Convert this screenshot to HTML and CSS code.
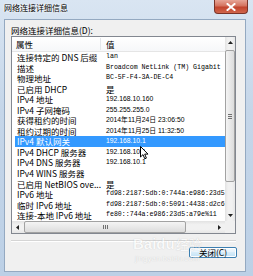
FILE: index.html
```html
<!DOCTYPE html>
<html lang="zh-CN">
<head>
  <meta charset="UTF-8">
  <title>网络连接详细信息</title>
  <link rel="stylesheet" href="styles.css">
</head>
<body>
  <div class="window">
    <div class="titlebar">
      <span class="title">网络连接详细信息</span>
      <span class="close-btn">
        <svg width="10" height="8" viewBox="0 0 10 8"><path d="M1.5 1 L8.5 7 M8.5 1 L1.5 7" stroke="#fff" stroke-width="2" stroke-linecap="square"/></svg>
      </span>
    </div>
    <div class="face">
      <div class="label">网络连接详细信息(D):</div>
      <div class="listview">
        <div class="list-main">
          <div class="list-header">
            <span class="hcell hcell-prop">属性</span>
            <span class="hcell">值</span>
          </div>
          <div class="row"><span class="prop">连接特定的 DNS 后缀</span><span class="val mono">lan</span></div>
          <div class="row"><span class="prop">描述</span><span class="val mono">Broadcom NetLink (TM) Gigabit</span></div>
          <div class="row"><span class="prop">物理地址</span><span class="val mono">BC-5F-F4-3A-DE-C4</span></div>
          <div class="row"><span class="prop">已启用 DHCP</span><span class="val">是</span></div>
          <div class="row"><span class="prop">IPv4 地址</span><span class="val num">192.168.10.160</span></div>
          <div class="row"><span class="prop">IPv4 子网掩码</span><span class="val num">255.255.255.0</span></div>
          <div class="row"><span class="prop">获得租约的时间</span><span class="val num">2014年11月24日 23:06:50</span></div>
          <div class="row"><span class="prop">租约过期的时间</span><span class="val num">2014年11月25日 11:32:50</span></div>
          <div class="row selected"><span class="prop">IPv4 默认网关</span><span class="val num">192.168.10.1</span></div>
          <div class="row"><span class="prop">IPv4 DHCP 服务器</span><span class="val num">192.168.10.1</span></div>
          <div class="row"><span class="prop">IPv4 DNS 服务器</span><span class="val num">192.168.10.1</span></div>
          <div class="row"><span class="prop">IPv4 WINS 服务器</span><span class="val"></span></div>
          <div class="row"><span class="prop">已启用 NetBIOS ove...</span><span class="val">是</span></div>
          <div class="row"><span class="prop">IPv6 地址</span><span class="val mono">fd98:2187:5db:0:744a:e986:23d5</span></div>
          <div class="row"><span class="prop">临时 IPv6 地址</span><span class="val mono">fd98:2187:5db:0:5091:4438:d2c6</span></div>
          <div class="row"><span class="prop">连接-本地 IPv6 地址</span><span class="val mono">fe80::744a:e986:23d5:a79e%11</span></div>
        </div>
        <div class="vscroll">
          <div class="sb-arrow"><svg width="5" height="3" viewBox="0 0 5 3"><polygon points="2.5,0 5,3 0,3" fill="#222"/></svg></div>
          <div class="vthumb"><span class="vgrip"></span></div>
          <div class="sb-fill"></div>
          <div class="sb-arrow"><svg width="5" height="3" viewBox="0 0 5 3"><polygon points="0,0 5,0 2.5,3" fill="#222"/></svg></div>
        </div>
        <div class="hscroll">
          <div class="sb-arrow h"><svg width="3" height="5" viewBox="0 0 3 5"><polygon points="0,2.5 3,0 3,5" fill="#222"/></svg></div>
          <div class="hthumb"><span class="hgrip"></span></div>
          <div class="sb-fill"></div>
          <div class="sb-arrow h"><svg width="3" height="5" viewBox="0 0 3 5"><polygon points="0,0 3,2.5 0,5" fill="#222"/></svg></div>
        </div>
        <div class="corner"></div>
      </div>
      <div class="sep"></div>
      <div class="buttons">
        <button type="button" class="btn">关闭(C)</button>
      </div>
      <div class="watermark">
        <span class="wm-logo">Bai<span class="wm-du">du</span></span><span class="wm-cn">经验</span>
        <div class="wm-url">jingyan.baidu.com</div>
      </div>
    </div>
    <svg class="cursor" width="9" height="14" viewBox="0 0 9 14">
      <path d="M0.5 0.5 L0.5 11 L3 8.6 L4.8 12.8 L6.4 12.1 L4.7 8.1 L8 8.1 Z" fill="#fff" stroke="#000" stroke-width="1"/>
    </svg>
  </div>
</body>
</html>
```

FILE: styles.css
```css
* {
  box-sizing: border-box;
}
body {
  margin: 0;
  width: 253px;
  height: 276px;
  overflow: hidden;
  font-family: "Noto Sans CJK SC", sans-serif;
  color: #000;
}
.window {
  position: relative;
  width: 253px;
  height: 276px;
  display: flex;
  flex-direction: column;
  background: linear-gradient(to bottom, #d9e5f2, #c5d6e9 40%, #bcd0e6);
}
.titlebar {
  height: 19px;
  display: flex;
  justify-content: space-between;
  align-items: flex-start;
  padding-left: 4px;
}
.title {
  font-size: 8px;
  line-height: 16px;
  text-shadow: 0 0 3px #fff, 0 0 2px #fff;
}
.close-btn {
  width: 34px;
  height: 14px;
  margin-right: 5px;
  display: flex;
  align-items: center;
  justify-content: center;
  border: 1px solid #7a3328;
  border-top: none;
  border-radius: 0 0 4px 4px;
  background: linear-gradient(to bottom, #e7a596, #d4735f 45%, #c2442d 55%, #d0664c);
}
.face {
  position: relative;
  flex: 1;
  margin: 0 7px 4px 4px;
  padding: 4px 9px 0 6px;
  display: flex;
  flex-direction: column;
  background: #f0f0f0;
  border: 1px solid #94a9c1;
}
.label {
  font-size: 8.5px;
  line-height: 12px;
}
.listview {
  height: 198px;
  display: grid;
  grid-template-columns: 1fr 10px;
  grid-template-rows: 184px 12px;
  background: #fff;
  border: 1px solid #828790;
}
.list-main {
  overflow: hidden;
  white-space: nowrap;
}
.list-header {
  height: 15px;
  display: flex;
  align-items: center;
  border-bottom: 1px solid #e5e5e5;
  background: linear-gradient(to bottom, #fff, #f6f7f9);
}
.hcell {
  font-size: 8.5px;
  line-height: 12px;
  padding-left: 5px;
}
.hcell-prop {
  width: 89px;
  padding-left: 4px;
  border-right: 1px solid #e3e6ea;
}
.row {
  height: 10.55px;
  display: flex;
  align-items: center;
  margin-left: 3px;
}
.row.selected {
  background: #3399ff;
  color: #fff;
}
.prop {
  flex: none;
  width: 86px;
  padding-left: 2px;
  overflow: hidden;
  font-size: 8.5px;
  line-height: 10.55px;
}
.val {
  padding-left: 5px;
  font-size: 8.5px;
  line-height: 10.55px;
}
.val.mono {
  font-family: "Liberation Mono", "Noto Sans CJK SC", monospace;
  font-size: 6.6px;
}
.val.num {
  font-family: "Liberation Sans", "Noto Sans CJK SC", sans-serif;
  font-size: 6.8px;
}
.vscroll {
  grid-row: 1;
  grid-column: 2;
  display: flex;
  flex-direction: column;
  background: linear-gradient(to right, #e2e2e2, #f1f1f1 30%, #f1f1f1 70%, #e6e6e6);
}
.hscroll {
  grid-row: 2;
  grid-column: 1;
  display: flex;
  background: linear-gradient(to bottom, #e2e2e2, #f1f1f1 30%, #f1f1f1 70%, #e6e6e6);
}
.corner {
  grid-row: 2;
  grid-column: 2;
  background: #f0f0f0;
}
.sb-arrow {
  flex: none;
  height: 11px;
  display: flex;
  align-items: center;
  justify-content: center;
}
.sb-arrow.h {
  height: auto;
  width: 11px;
}
.sb-fill {
  flex: 1;
}
.vthumb {
  height: 132px;
  margin: 2px 0 0;
  display: flex;
  align-items: center;
  justify-content: center;
  border: 1px solid #a2a2a2;
  border-radius: 2px;
  background: linear-gradient(to right, #f4f4f4, #e8e8e8 50%, #dcdcdc);
}
.vgrip {
  width: 4px;
  height: 5px;
  background: repeating-linear-gradient(to bottom, #707070 0 1px, transparent 1px 2px);
}
.hthumb {
  width: 162px;
  margin: 0 0 0 1px;
  display: flex;
  align-items: center;
  justify-content: center;
  border: 1px solid #a2a2a2;
  border-radius: 2px;
  background: linear-gradient(to bottom, #f4f4f4, #e8e8e8 50%, #dcdcdc);
}
.hgrip {
  width: 5px;
  height: 4px;
  background: repeating-linear-gradient(to right, #707070 0 1px, transparent 1px 2px);
}
.sep {
  margin-top: 6px;
  height: 2px;
  border-top: 1px solid #d5d5d5;
  border-bottom: 1px solid #fff;
}
.buttons {
  display: flex;
  justify-content: flex-end;
  margin: 5px -1px 0 0;
}
.btn {
  width: 48px;
  height: 11px;
  padding: 0;
  font-family: inherit;
  font-size: 8.5px;
  line-height: 9px;
  color: #000;
  border: 1px solid #3c7fb1;
  border-radius: 2px;
  background: linear-gradient(to bottom, #f2f9fd, #e7f3fb 50%, #d7ecf9 50%, #c2e2f6);
  box-shadow: inset 0 0 0 1px #fff;
}
.watermark {
  position: absolute;
  left: 128px;
  top: 210px;
  color: #fff;
  opacity: 0.6;
  text-shadow: 0 0 1px rgba(0, 0, 0, 0.3);
  white-space: nowrap;
}
.wm-logo {
  font-family: "Liberation Sans", sans-serif;
  font-weight: bold;
  font-size: 15px;
  line-height: 18px;
}
.wm-cn {
  font-size: 13px;
  margin-left: 1px;
}
.wm-url {
  font-family: "Liberation Sans", sans-serif;
  font-size: 8px;
  line-height: 10px;
  margin-left: 2px;
}
.cursor {
  position: absolute;
  left: 140px;
  top: 146px;
}
```
